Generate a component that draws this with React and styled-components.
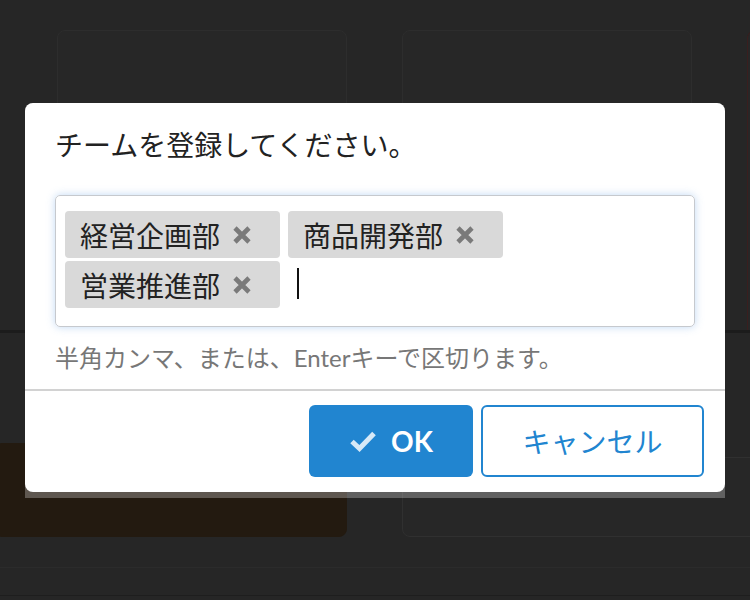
import styled, { createGlobalStyle } from "styled-components";

const GlobalStyle = createGlobalStyle`
  html, body {
    margin: 0;
    padding: 0;
    background: #262626;
    overflow: hidden;
  }
  body {
    font-family: "Lato", "Noto Sans CJK JP", sans-serif;
  }
`;

const Page = styled.div`
  width: 750px;
  height: 600px;
  position: relative;
  overflow: hidden;
  background: #262626;
`;

// 背景（モーダルの後ろの画面）
const CardRow = styled.div`
  display: flex;
  gap: 55px;
  padding: 30px 0 0 57px;
  height: 330px;
  box-sizing: border-box;
  overflow: hidden;
`;

const Card = styled.div`
  width: ${(p) => p.$width || 290}px;
  flex-shrink: 0;
  height: ${(p) => p.$height || 320}px;
  background: ${(p) => p.$bg || "#272727"};
  border: 1px solid ${(p) => p.$border || "#2d2d2d"};
  border-radius: ${(p) => p.$radius || "8px"};
  box-sizing: border-box;
`;

const SectionLine = styled.div`
  height: 3px;
  background: #1c1c1c;
`;

const BottomRow = styled.div`
  display: flex;
  gap: 55px;
  align-items: flex-end;
  height: 204px;
`;

const ThinLine = styled.div`
  height: 1px;
  background: ${(p) => p.$color};
  margin-top: ${(p) => p.$gap || 0}px;
`;

// モーダル
const ModalFrame = styled.div`
  position: absolute;
  left: 25px;
  top: 103px;
  width: 700px;
  padding-bottom: 6px;
  border-radius: 8px 8px 0 0;
  background: rgba(255, 255, 255, 0.27);
`;

const Modal = styled.div`
  background: #fff;
  border-radius: 8px;
  overflow: hidden;
`;

const Header = styled.div`
  padding: 22px 30px 0;
  font-size: 28px;
  line-height: 40px;
  color: #222;
`;

const Content = styled.div`
  padding: 30px 30px 16px;
`;

const TagBox = styled.div`
  border: 1px solid #c6c9ce;
  border-radius: 5px;
  box-shadow: 0 0 9px rgba(120, 170, 230, 0.45);
  padding: 15px 9px 18px;
  display: flex;
  flex-wrap: wrap;
  gap: 3px 8px;
  min-height: 132px;
  box-sizing: border-box;
  align-content: flex-start;
`;

const Tag = styled.div`
  display: flex;
  align-items: center;
  height: 47px;
  width: 215px;
  box-sizing: border-box;
  padding: 0 0 0 15px;
  background: #d9d9d9;
  border-radius: 4px;
  font-size: 28px;
  color: #222;
  font-family: "Noto Sans CJK JP", sans-serif;
`;

const TagLabel = styled.span`
  width: 138px;
  white-space: nowrap;
`;

const RemoveIcon = styled.svg`
  margin-left: 14px;
  flex-shrink: 0;
`;

const Caret = styled.div`
  width: 2px;
  height: 31px;
  background: #111;
  margin: 7px 0 0 9px;
`;

const Help = styled.div`
  margin-top: 16px;
  font-size: 24px;
  line-height: 30px;
  color: #777;
`;

const Actions = styled.div`
  border-top: 2px solid #d2d2d2;
  padding: 14px 21px 15px;
  display: flex;
  justify-content: flex-end;
  gap: 8px;
`;

const Button = styled.button`
  height: 72px;
  width: ${(p) => p.$width}px;
  border-radius: 6px;
  font-family: "Lato", "Noto Sans CJK JP", sans-serif;
  font-size: 28px;
  display: flex;
  align-items: center;
  justify-content: center;
  gap: 14px;
  box-sizing: border-box;
  cursor: pointer;
  background: ${(p) => (p.$primary ? "#2185d0" : "#fff")};
  color: ${(p) => (p.$primary ? "#fff" : "#2185d0")};
  border: ${(p) => (p.$primary ? "none" : "2px solid #2185d0")};
  font-weight: ${(p) => (p.$primary ? 700 : 400)};
  padding: 0;
`;

const tags = ["経営企画部", "商品開発部", "営業推進部"];

const CrossIcon = () => (
  <RemoveIcon width="20" height="18" viewBox="0 0 20 18">
    <path d="M3 2 L17 16 M17 2 L3 16" stroke="#7a7a7a" strokeWidth="4.6" />
  </RemoveIcon>
);

const CheckIcon = () => (
  <svg width="28" height="22" viewBox="0 0 28 22">
    <path
      d="M3 11.5 L10.5 18.5 L25 3.5"
      fill="none"
      stroke="rgba(255,255,255,0.82)"
      strokeWidth="5"
    />
  </svg>
);

export default function App() {
  return (
    <Page>
      <GlobalStyle />
      <CardRow>
        <Card />
        <Card />
        <Card $border="#3a1e1e" />
      </CardRow>
      <SectionLine />
      <BottomRow>
        <Card $width={347} $height={94} $bg="#231a10" $border="#231a10" $radius="0 0 8px 0" />
        <Card $width={360} $height={80} $border="#303030" $radius="8px 0 0 8px" />
      </BottomRow>
      <ThinLine $color="#2b2b2b" $gap={30} />
      <ThinLine $color="#1e1e1e" $gap={27} />

      <ModalFrame>
        <Modal>
          <Header>チームを登録してください。</Header>
          <Content>
            <TagBox>
              {tags.map((t) => (
                <Tag key={t}>
                  <TagLabel>{t}</TagLabel>
                  <CrossIcon />
                </Tag>
              ))}
              <Caret />
            </TagBox>
            <Help>半角カンマ、または、Enterキーで区切ります。</Help>
          </Content>
          <Actions>
            <Button $primary $width={164}>
              <CheckIcon />
              OK
            </Button>
            <Button $width={223}>キャンセル</Button>
          </Actions>
        </Modal>
      </ModalFrame>
    </Page>
  );
}
